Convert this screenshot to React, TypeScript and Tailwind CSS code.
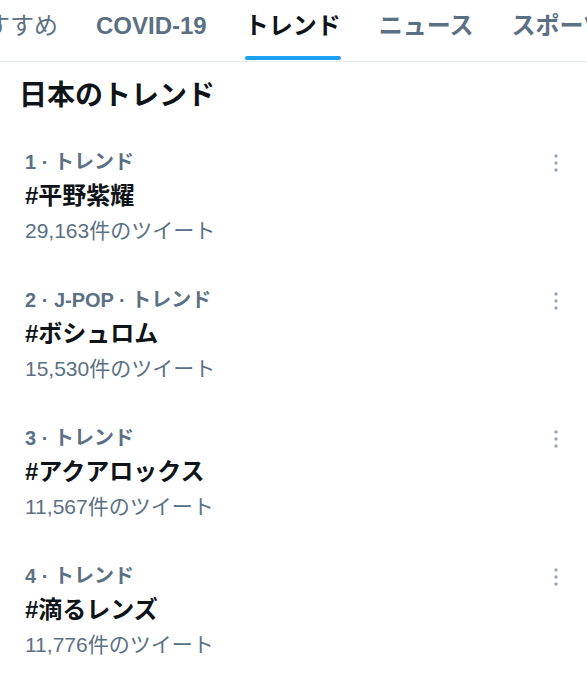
import React from "react";

const font = { fontFamily: '"Liberation Sans", "Noto Sans CJK JP", sans-serif' };

const trends = [
  { label: "1 · トレンド", title: "#平野紫耀", count: "29,163件のツイート" },
  { label: "2 · J-POP · トレンド", title: "#ボシュロム", count: "15,530件のツイート" },
  { label: "3 · トレンド", title: "#アクアロックス", count: "11,567件のツイート" },
  { label: "4 · トレンド", title: "#滴るレンズ", count: "11,776件のツイート" },
];

function Dots() {
  return (
    <svg width="6" height="20" viewBox="0 0 6 20" className="text-[#9aa7b2]">
      <circle cx="3" cy="3" r="1.7" fill="currentColor" />
      <circle cx="3" cy="10" r="1.7" fill="currentColor" />
      <circle cx="3" cy="17" r="1.7" fill="currentColor" />
    </svg>
  );
}

export default function App() {
  return (
    <div className="w-[587px] h-[680px] bg-white overflow-hidden" style={font}>
      <div className="h-[62px] border-b border-[#e6ecf0] overflow-hidden">
        <div className="flex items-start gap-[38px] ml-[-38px] whitespace-nowrap text-[24px] font-bold text-[#5b7083]">
          <div className="flex flex-col items-stretch">
            <span className="h-[56px] leading-[52px] font-normal">おすすめ</span>
          </div>
          <div className="flex flex-col">
            <span className="h-[56px] leading-[52px]">COVID-19</span>
          </div>
          <div className="flex flex-col">
            <span className="h-[56px] leading-[52px] text-[#0f1419]">トレンド</span>
            <div className="h-[4px] rounded-full bg-[#1da1f2]" />
          </div>
          <div className="flex flex-col">
            <span className="h-[56px] leading-[52px]">ニュース</span>
          </div>
          <div className="flex flex-col">
            <span className="h-[56px] leading-[52px]">スポーツ</span>
          </div>
        </div>
      </div>
      <div className="pl-[19px] pt-[17px] pb-[6px] text-[28px] font-bold text-[#0f1419] leading-[34px]">
        日本のトレンド
      </div>
      <div className="flex flex-col">
        {trends.map((t) => (
          <div key={t.title} className="flex h-[138px] pl-[25px] pr-[28px] pt-[28px]">
            <div className="flex-1 flex flex-col">
              <div className="text-[20px] font-bold text-[#5b7083] leading-[30px]">{t.label}</div>
              <div className="text-[24px] font-bold text-[#0f1419] leading-[38px]">{t.title}</div>
              <div className="text-[21px] text-[#5b7083] leading-[32px]">{t.count}</div>
            </div>
            <div className="pt-[6px]">
              <Dots />
            </div>
          </div>
        ))}
      </div>
    </div>
  );
}
